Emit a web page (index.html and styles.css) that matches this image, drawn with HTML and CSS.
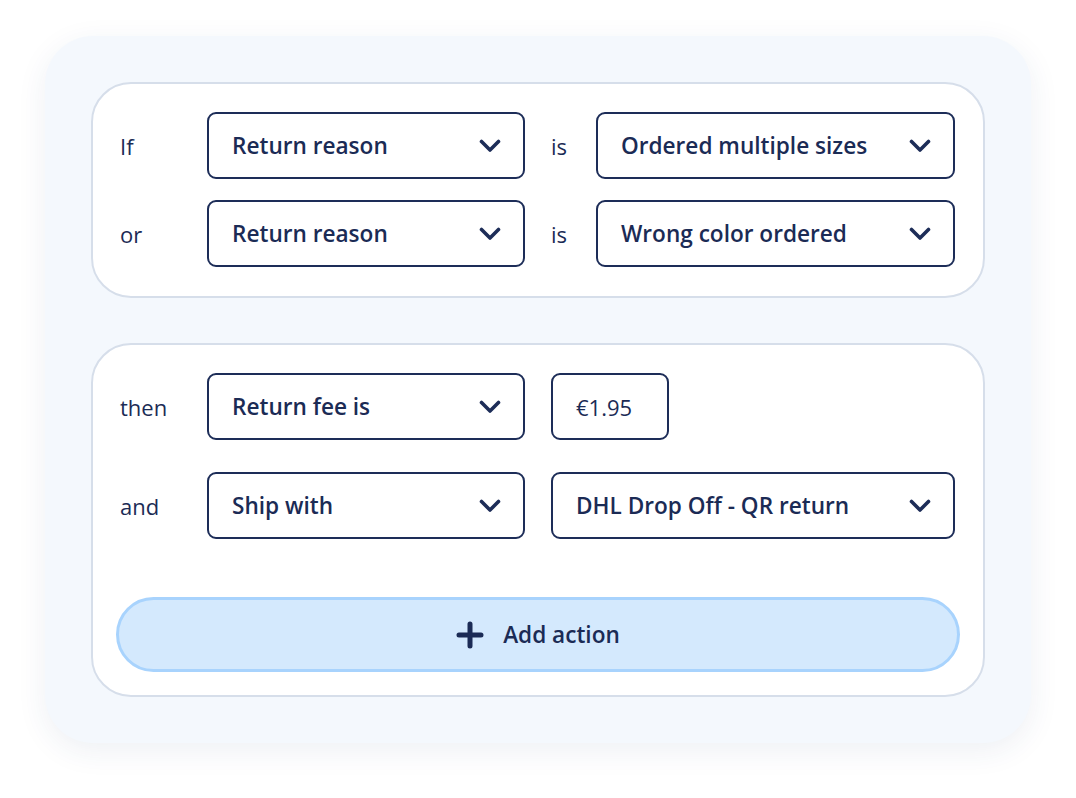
FILE: index.html
```html
<!DOCTYPE html>
<html lang="en">
<head>
<meta charset="utf-8">
<title>Return rule</title>
<link rel="stylesheet" href="styles.css">
</head>
<body>
<div class="outer">
  <section class="card card-if">
    <div class="row">
      <span class="label">If</span>
      <div class="select w-main"><span>Return reason</span><svg class="chev" viewBox="0 0 22 14"><path d="M2.5 2.5 L11 11 L19.5 2.5"/></svg></div>
      <span class="op">is</span>
      <div class="select w-value"><span>Ordered multiple sizes</span><svg class="chev" viewBox="0 0 22 14"><path d="M2.5 2.5 L11 11 L19.5 2.5"/></svg></div>
    </div>
    <div class="row">
      <span class="label">or</span>
      <div class="select w-main"><span>Return reason</span><svg class="chev" viewBox="0 0 22 14"><path d="M2.5 2.5 L11 11 L19.5 2.5"/></svg></div>
      <span class="op">is</span>
      <div class="select w-value"><span>Wrong color ordered</span><svg class="chev" viewBox="0 0 22 14"><path d="M2.5 2.5 L11 11 L19.5 2.5"/></svg></div>
    </div>
  </section>
  <section class="card card-then">
    <div class="row">
      <span class="label">then</span>
      <div class="select w-main"><span>Return fee is</span><svg class="chev" viewBox="0 0 22 14"><path d="M2.5 2.5 L11 11 L19.5 2.5"/></svg></div>
      <div class="input"><span>€1.95</span></div>
    </div>
    <div class="row">
      <span class="label">and</span>
      <div class="select w-main"><span>Ship with</span><svg class="chev" viewBox="0 0 22 14"><path d="M2.5 2.5 L11 11 L19.5 2.5"/></svg></div>
      <div class="select w-wide"><span>DHL Drop Off - QR return</span><svg class="chev" viewBox="0 0 22 14"><path d="M2.5 2.5 L11 11 L19.5 2.5"/></svg></div>
    </div>
    <button class="add">
      <svg class="plus" viewBox="0 0 28 28"><path d="M14 3 V25 M3 14 H25"/></svg>
      <span>Add action</span>
    </button>
  </section>
</div>
</body>
</html>
```
FILE: styles.css
```css
html, body {
  margin: 0;
  padding: 0;
  background: #ffffff;
}
body {
  width: 1076px;
  height: 798px;
  font-family: "Open Sans", "Lato", sans-serif;
  color: #1b2b55;
}
.outer {
  position: relative;
  margin: 36px 0 0 45px;
  width: 986px;
  height: 707px;
  box-sizing: border-box;
  padding: 46px;
  background: #f4f8fd;
  border-radius: 48px;
  box-shadow: 0 8px 30px rgba(40, 60, 110, 0.08);
  display: flex;
  flex-direction: column;
  gap: 45px;
}
.card {
  background: #ffffff;
  border: 2px solid #d6deea;
  border-radius: 40px;
  padding: 28px 27px 29px 27px;
  display: flex;
  flex-direction: column;
}
.card-if {
  gap: 21px;
}
.card-then {
  gap: 32px;
  padding-bottom: 23px;
}
.row {
  display: flex;
  align-items: center;
  height: 67px;
}
.label {
  width: 87px;
  font-size: 22px;
  font-weight: 400;
}
.op {
  width: 45px;
  margin-left: 26px;
  font-size: 22px;
}
.select, .input {
  height: 67px;
  box-sizing: border-box;
  border: 2px solid #1d2d58;
  border-radius: 9px;
  display: flex;
  align-items: center;
  justify-content: space-between;
  padding: 0 22px 0 23px;
  font-size: 22.6px;
  font-weight: 600;
}
.w-main { width: 318px; }
.w-value { width: 359px; }
.w-wide { width: 404px; margin-left: 26px; }
.input {
  width: 118px;
  margin-left: 26px;
  font-weight: 400;
  font-size: 22px;
}
.chev {
  width: 22px;
  height: 14px;
  fill: none;
  stroke: #1d2d58;
  stroke-width: 3.6;
  stroke-linecap: round;
  stroke-linejoin: round;
}
.add {
  margin: 26px -4px 0 -4px;
  height: 75px;
  box-sizing: border-box;
  border: 3px solid #a8d3fd;
  border-radius: 38px;
  background: #d4e9fd;
  display: flex;
  align-items: center;
  justify-content: center;
  gap: 19px;
  font-family: inherit;
  font-size: 22.6px;
  font-weight: 600;
  color: #1b2b55;
  padding: 0;
}
.plus {
  width: 28px;
  height: 28px;
  fill: none;
  stroke: #1b2b55;
  stroke-width: 5;
  stroke-linecap: round;
}
```
